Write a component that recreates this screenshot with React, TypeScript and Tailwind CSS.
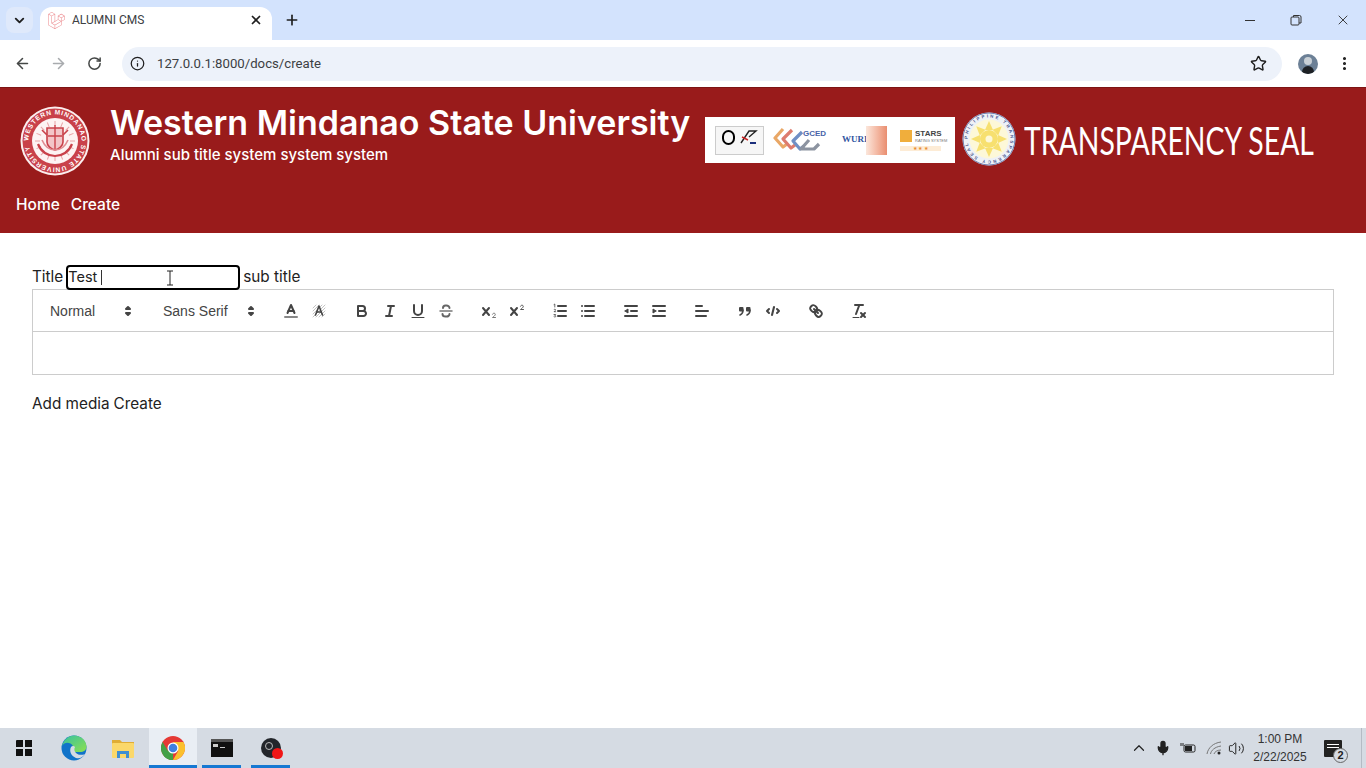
import { ArrowLeft, ArrowRight, ChevronDown, ChevronUp, Info, Mic, MoreVertical, Plus, RotateCw, Star, Volume2, X } from 'lucide-react'
import { FaLaravel } from 'react-icons/fa'

const ink = { fill: 'none', stroke: '#444', strokeWidth: 2, strokeLinecap: 'round', strokeLinejoin: 'round' } as const

function ToolButton({ children }: { children: React.ReactNode }) {
  return (
    <button className="w-[28px] h-[24px] px-[5px] py-[3px] shrink-0">
      <svg viewBox="0 0 18 18" className="w-[18px] h-[18px] block" {...ink}>{children}</svg>
    </button>
  )
}

function Picker({ label, width }: { label: string; width: string }) {
  return (
    <span className={`relative h-[24px] flex items-center pl-[9px] text-[14px] text-[#444] shrink-0 font-['Liberation_Sans',sans-serif] ${width}`}>
      {label}
      <svg viewBox="0 0 18 18" className="absolute right-[2px] top-[3px] w-[18px] h-[18px]">
        <polygon points="7 11 9 13 11 11 7 11" fill="#444" stroke="#444" strokeWidth="2" strokeLinejoin="round" />
        <polygon points="7 7 9 5 11 7 7 7" fill="#444" stroke="#444" strokeWidth="2" strokeLinejoin="round" />
      </svg>
    </span>
  )
}

function EditorToolbar() {
  return (
    <div className="flex items-center gap-[15px] border border-[#ccc] px-2 pt-[9px] pb-2">
      <div className="flex gap-[15px]">
        <Picker label="Normal" width="w-[98px]" />
        <Picker label="Sans Serif" width="w-[108px]" />
      </div>
      <div className="flex">
        <ToolButton>
          <line x1="3" x2="15" y1="15" y2="15" stroke="#888" />
          <polyline points="5.5 11 9 3 12.5 11" />
          <line x1="11.63" x2="6.38" y1="9" y2="9" />
        </ToolButton>
        <ToolButton>
          <g strokeWidth="0.6" stroke="#999">
            <path d="M3 6 6 3M3 9 9 3M3 12l9-9M3 15 15 3M6 15l9-9M9 15l6-6M12 15l3-3" />
          </g>
          <polyline points="5.5 13 9 4 12.5 13" strokeWidth="1.6" />
          <line x1="11" x2="7" y1="10" y2="10" strokeWidth="1.6" />
        </ToolButton>
      </div>
      <div className="flex">
        <ToolButton>
          <path d="M5,4H9.5A2.5,2.5,0,0,1,12,6.5v0A2.5,2.5,0,0,1,9.5,9H5V4Z" />
          <path d="M5,9h5.5A2.5,2.5,0,0,1,13,11.5v0A2.5,2.5,0,0,1,10.5,14H5V9Z" />
        </ToolButton>
        <ToolButton>
          <line x1="7" x2="13" y1="4" y2="4" />
          <line x1="5" x2="11" y1="14" y2="14" />
          <line x1="8" x2="10" y1="14" y2="4" />
        </ToolButton>
        <ToolButton>
          <path d="M5,3V9a4,4,0,0,0,4,4H9a4,4,0,0,0,4-4V3" />
          <line x1="3" x2="15" y1="15.5" y2="15.5" strokeWidth="1" />
        </ToolButton>
        <ToolButton>
          <line x1="3" x2="15" y1="9" y2="9" strokeWidth="1.5" stroke="#777" />
          <path d="M12.5,6A3,2.5,0,0,0,9.5,3.5H8.5A2.5,2.5,0,0,0,6,6" stroke="#666" />
          <path d="M5.5,12A3,2.5,0,0,0,8.5,14.5H9.5A2.7,2.7,0,0,0,12.5,12" stroke="#666" />
        </ToolButton>
      </div>
      <div className="flex">
        <ToolButton>
          <path d="M3 6l6 7M9 6l-6 7" />
          <path d="M12.5 12.2c.4-1.5 2.8-1.3 2.8.2 0 1.2-1.7 1.9-2.8 3.1h3" strokeWidth="1" stroke="#777" />
        </ToolButton>
        <ToolButton>
          <path d="M3 6l6 7M9 6l-6 7" />
          <path d="M12.5 4.2c.4-1.5 2.8-1.3 2.8.2 0 1.2-1.7 1.9-2.8 3.1h3" strokeWidth="1" stroke="#555" />
        </ToolButton>
      </div>
      <div className="flex">
        <ToolButton>
          <path d="M7 4h8M7 9h8M7 14h8" />
          <path d="M3 2.5l.8-.5v3M3 7.6c.4-.7 1.6-.5 1.6.3 0 .7-1 1-1.6 1.8h1.7M3 12.5h1.6l-.8 1c.9 0 1 .5 1 .8 0 .8-1.2.9-1.8.4" strokeWidth=".8" />
        </ToolButton>
        <ToolButton>
          <path d="M6 4h9M6 9h9M6 14h9" />
          <path d="M3 4h.01M3 9h.01M3 14h.01" />
        </ToolButton>
      </div>
      <div className="flex">
        <ToolButton>
          <path d="M3 14h12M3 4h12M9 9h6" />
          <polyline points="3 9 6 7 6 11 3 9" fill="#444" strokeWidth="1" />
        </ToolButton>
        <ToolButton>
          <path d="M3 14h12M3 4h12M9 9h6" />
          <polyline points="6 9 3 7 3 11 6 9" fill="#444" strokeWidth="1" />
        </ToolButton>
      </div>
      <div className="flex">
        <ToolButton>
          <line x1="3" x2="15" y1="9" y2="9" />
          <line x1="3" x2="13" y1="14" y2="14" />
          <line x1="3" x2="9" y1="4" y2="4" />
        </ToolButton>
      </div>
      <div className="flex">
        <ToolButton>
          <rect x="3" y="5" width="4.5" height="4.5" rx="1" fill="#444" stroke="none" />
          <rect x="10" y="5" width="4.5" height="4.5" rx="1" fill="#444" stroke="none" />
          <path d="M7 8c0 2.5-.6 4-3 5M14 8c0 2.5-.6 4-3 5" strokeWidth="1.6" />
        </ToolButton>
        <ToolButton>
          <polyline points="5 7 3 9 5 11" />
          <polyline points="13 7 15 9 13 11" />
          <line x1="10" x2="8" y1="5" y2="13" />
        </ToolButton>
      </div>
      <div className="flex">
        <ToolButton>
          <line x1="7" x2="11" y1="7" y2="11" />
          <path d="M8.9,4.577a3.476,3.476,0,0,1,.36,4.679A3.476,3.476,0,0,1,4.577,8.9C3.185,7.5,2.035,6.4,4.217,4.217S7.5,3.185,8.9,4.577Z" />
          <path d="M13.423,9.1a3.476,3.476,0,0,0-4.679-.36,3.476,3.476,0,0,0,.36,4.679c1.392,1.392,2.5,2.542,4.679.36S14.815,10.5,13.423,9.1Z" />
        </ToolButton>
      </div>
      <div className="flex">
        <ToolButton>
          <line x1="5" x2="13" y1="3" y2="3" />
          <line x1="6" x2="9.35" y1="12" y2="3" />
          <line x1="11" x2="15" y1="11" y2="15" />
          <line x1="15" x2="11" y1="11" y2="15" />
          <line x1="3" x2="9" y1="15.5" y2="15.5" strokeWidth="1" />
        </ToolButton>
      </div>
    </div>
  )
}

function UniversitySeal() {
  const spokes = Array.from({ length: 16 }, (_, i) => i * 22.5)
  return (
    <svg viewBox="0 0 70 70" className="w-[70px] h-[70px] shrink-0">
      <defs>
        <path id="sealRing" d="M35 35m-26.5 0a26.5 26.5 0 1 1 53 0a26.5 26.5 0 1 1-53 0" />
      </defs>
      <circle cx="35" cy="35" r="34.5" fill="#fbeeee" />
      <circle cx="35" cy="35" r="32.5" fill="#c9414a" />
      <text fontSize="6.6" fontWeight="700" fill="#fff" fontFamily="Liberation Sans, sans-serif">
        <textPath href="#sealRing" textLength="160">WESTERN MINDANAO STATE UNIVERSITY</textPath>
      </text>
      <circle cx="35" cy="35" r="23" fill="#fdf3f3" />
      {spokes.map((a) => (
        <line key={a} x1="35" y1="20" x2="35" y2="15" stroke="#e8a4a8" strokeWidth="1" transform={`rotate(${a} 35 35)`} />
      ))}
      <path d="M27 22h16v14c0 4-4 7-8 8-4-1-8-4-8-8z" fill="#f3c5c8" stroke="#c9414a" strokeWidth="1.6" />
      <path d="M35 19v24M28 30h14" stroke="#c9414a" strokeWidth="1.4" />
      <path d="M18 38c3 8 10 12 17 12s14-4 17-12" fill="none" stroke="#c9414a" strokeWidth="2.2" />
      <path d="M22 34c3 7 8 10 13 10s10-3 13-10" fill="none" stroke="#e08b90" strokeWidth="1.6" />
      <path d="M22 24l5 5M48 24l-5 5" stroke="#c9414a" strokeWidth="1.6" />
    </svg>
  )
}

function TransparencySeal() {
  const rays = Array.from({ length: 8 }, (_, i) => i * 45)
  return (
    <svg viewBox="0 0 54 54" className="w-[54px] h-[54px] shrink-0">
      <defs>
        <path id="transRing" d="M27 27m-21.500 0a21.500 21.500 0 1 1 43 0a21.500 21.500 0 1 1-43 0" />
      </defs>
      <circle cx="27" cy="27" r="26.5" fill="#eef1f7" />
      <circle cx="27" cy="27" r="26" fill="none" stroke="#6f7cae" strokeWidth="1" />
      <text fontSize="4.4" fontWeight="700" fill="#4a568f" fontFamily="Liberation Sans, sans-serif">
        <textPath href="#transRing" textLength="130">PHILIPPINE TRANSPARENCY SEAL</textPath>
      </text>
      <circle cx="27" cy="27" r="19.500" fill="#fdf8d8" />
      {rays.map((a) => (
        <path key={a} d="M27 9l4 9h-8z" fill="#f7e06f" transform={`rotate(${a} 27 27)`} />
      ))}
      <circle cx="27" cy="27" r="9" fill="#f7e06f" />
      <circle cx="27" cy="27" r="3.5" fill="#fdf8d8" />
    </svg>
  )
}

function AccreditationStrip() {
  return (
    <div className="w-[250px] h-[46px] -mt-[2px] bg-white shrink-0 flex items-center pl-[10px] font-['Liberation_Sans',sans-serif]">
      <div className="w-[49px] h-[29px] border border-[#ccc] bg-[#f6f6f6] flex items-center justify-around px-[3px] shrink-0">
        <span className="w-[13px] h-[15px] rounded-full border-2 border-black mb-[6px]" />
        <svg viewBox="0 0 18 18" className="w-[18px] h-[18px] mb-[6px]">
          <path d="M1 15 9 3h7L9 9" fill="none" stroke="#222" strokeWidth="1.4" />
          <path d="M2 9l6 3" stroke="#c22" strokeWidth="1.4" />
          <path d="M10 15h6" stroke="#1c2f7c" strokeWidth="2" />
        </svg>
      </div>
      <svg viewBox="0 0 52 28" className="w-[52px] h-[28px] ml-[9px] shrink-0" fill="none" strokeWidth="3.2" strokeLinejoin="round">
        <path d="M10 3 2 12l8 9 4-3" stroke="#e9a766" />
        <path d="M19 4l-9 9 8 9 4-3" stroke="#dd7b6e" />
        <path d="M29 6l-9 9 7 8 4-3" stroke="#6f8fc5" />
        <path d="M36 14l-8 9h13l5-5" stroke="#8c93a0" />
      </svg>
      <div className="w-[22px] -ml-[22px] mb-[13px] text-[8px] leading-[8px] font-bold text-[#4864a8] shrink-0">GCED</div>
      <div className="ml-[17px] flex items-center shrink-0">
        <span className="text-[9px] font-bold font-['Liberation_Serif',serif] text-[#32569f] w-[24px]">WURI</span>
        <span className="w-[21px] h-[29px] bg-gradient-to-r from-[#fbe7dc] to-[#e98e70]" />
      </div>
      <div className="ml-[13px] shrink-0">
        <div className="flex items-center gap-[3px]">
          <span className="w-[12px] h-[12px] bg-[#f0ae3c]" />
          <div>
            <div className="text-[8px] leading-[8px] font-bold text-[#444]">STARS</div>
            <div className="text-[4px] leading-[5px] text-[#777]">RATING SYSTEM</div>
          </div>
        </div>
        <div className="mt-[3px] w-[41px] h-[5px] bg-[#fdecd6] text-center text-[5px] leading-[5px] text-[#e98e30]">★ ★ ★</div>
      </div>
    </div>
  )
}

function BrowserChrome() {
  return (
    <div className="shrink-0 font-['Roboto',sans-serif]">
      <div className="h-10 bg-[#d3e3fd] flex items-end text-[#1f1f1f]">
        <button className="ml-[6px] mb-[7px] w-[27px] h-[26px] rounded-lg bg-[#dfe9fb] flex items-center justify-center">
          <ChevronDown size={15} strokeWidth={3} />
        </button>
        <div className="ml-[7px] w-[232px] h-[33px] rounded-t-xl bg-white flex items-center pl-2 pr-[9px] pb-[7px]">
          <FaLaravel size={17} className="text-[#ec8b8f]" />
          <span className="ml-[7px] text-[12px] text-[#3c4043]">ALUMNI CMS</span>
          <X size={14} strokeWidth={3} className="ml-auto" />
        </div>
        <Plus size={16} strokeWidth={2.5} className="ml-[12px] mb-[12px]" />
        <div className="ml-auto flex items-center mb-[12px] pr-[15px] gap-[32px] text-[#333]">
          <svg viewBox="0 0 14 14" className="w-[14px] h-[14px]" fill="none" stroke="currentColor"><path d="M2 7.5h10" /></svg>
          <svg viewBox="0 0 14 14" className="w-[14px] h-[14px]" fill="none" stroke="currentColor"><rect x="2" y="4" width="8" height="8" rx="1" /><path d="M4.5 4V2.5h6a1.5 1.5 0 0 1 1.500 1.500v6H10" /></svg>
          <X size={16} strokeWidth={1.4} />
        </div>
      </div>
      <div className="h-[47px] bg-white rounded-t-lg flex items-center text-[#444746]">
        <ArrowLeft size={17} strokeWidth={2.2} className="ml-[14px]" />
        <ArrowRight size={17} strokeWidth={2.2} className="ml-[19px] text-[#a8abae]" />
        <RotateCw size={15} strokeWidth={2.4} className="ml-[20px]" />
        <div className="ml-[20px] w-[1160px] h-[34px] rounded-full bg-[#edf2fa] flex items-center">
          <Info size={15} strokeWidth={2} className="ml-[8px] text-[#1f1f1f]" />
          <span className="ml-[12px] text-[13.2px] text-[#3c4043]">127.0.0.1:8000/docs/create</span>
          <Star size={17} strokeWidth={2} className="ml-auto mr-[15px] text-[#1f1f1f]" />
        </div>
        <span className="ml-[16px] w-[20px] h-[20px] rounded-full bg-[#6c8096] overflow-hidden flex flex-col items-center">
          <span className="w-[8px] h-[8px] mt-[3px] rounded-full bg-[#c9d0d6]" />
          <span className="w-[12px] h-[8px] mt-[1px] rounded-t-md bg-[#1d2024]" />
        </span>
        <MoreVertical size={17} strokeWidth={2.4} className="ml-[18px] text-[#1f1f1f]" />
      </div>
    </div>
  )
}

function Taskbar() {
  return (
    <div className="h-10 shrink-0 bg-[#d5dbe3] flex items-stretch font-['Liberation_Sans',sans-serif]">
      <div className="ml-[16px] w-[16px] self-center grid grid-cols-2 gap-[1.500px]">
        <span className="h-[7px] bg-[#111] rounded-tl-[1px]" />
        <span className="h-[7px] bg-[#111]" />
        <span className="h-[7px] bg-[#111]" />
        <span className="h-[7px] bg-[#111]" />
      </div>
      <div className="ml-[29px] w-[26px] self-center">
        <svg viewBox="0 0 26 26" className="w-[26px] h-[26px] block">
          <defs>
            <linearGradient id="edgeA" x1="0" y1="0" x2="1" y2="1">
              <stop offset="0" stopColor="#35c1a0" />
              <stop offset="1" stopColor="#8ee04f" />
            </linearGradient>
          </defs>
          <circle cx="13" cy="13" r="12.500" fill="#1173c9" />
          <path d="M1 11C3 4 8 .5 13 .5c7 0 12.500 5 12.500 11.500 0 3-3 5-6.500 5H13c-1.500 0-2-1-1.500-2 1-2 1-5-2-6.500C6 7 3 8 1 11z" fill="url(#edgeA)" />
          <path d="M10 12c-2 4 0 9 5 11 4 1 7-1 9-4-3 1.500-7 1-9-1s-2-4-1-6c-1-1.500-3-1.500-4 0z" fill="#d5dbe3" />
        </svg>
      </div>
      <div className="ml-[25px] w-[22px] self-center">
        <svg viewBox="0 0 22 20" className="w-[22px] h-[20px] block">
          <path d="M0 2h8l2 2h12v3H0z" fill="#e0ad35" />
          <rect y="5" width="22" height="15" rx="1" fill="#fbd86a" />
          <rect x="5" y="13" width="12" height="7" fill="#3f8fd2" />
          <rect x="8" y="16" width="6" height="4" fill="#fbd86a" />
        </svg>
      </div>
      <div className="ml-[15px] w-[48px] bg-[#e9eef4] border-b-[3px] border-[#1678d2] flex items-center justify-center pt-[3px]">
        <svg viewBox="0 0 24 24" className="w-[24px] h-[24px]">
          <circle cx="12" cy="12" r="12" fill="#e53935" />
          <path d="M12 12 1.600 18A12 12 0 0 0 12 24z" fill="#43a047" />
          <path d="M1.600 18A12 12 0 0 1 1.600 6L7 15l5 9A12 12 0 0 1 1.600 18z" fill="#43a047" />
          <path d="M12 6h10.400A12 12 0 0 1 12 24l5.200-9z" fill="#fbc02d" />
          <circle cx="12" cy="12" r="5.500" fill="#fff" />
          <circle cx="12" cy="12" r="4.300" fill="#3f7fe0" />
        </svg>
      </div>
      <div className="ml-[5px] w-[39px] border-b-[3px] border-[#1678d2] flex items-center justify-center pt-[3px]">
        <div className="w-[22px] h-[18px] bg-[#111] border-t-[3px] border-[#555] relative">
          <span className="absolute left-[2px] top-[2px] w-[5px] h-[3px] bg-[#ccc]" />
          <span className="absolute left-[9px] top-[5px] w-[5px] h-[1px] bg-[#ccc]" />
        </div>
      </div>
      <div className="ml-[10px] w-[39px] border-b-[3px] border-[#1678d2] flex items-center justify-center pt-[3px]">
        <div className="relative w-[20px] h-[20px] rounded-full bg-[#23262b]">
          <span className="absolute left-[4px] top-[4px] w-[8px] h-[8px] rounded-full border border-[#bbb]" />
          <span className="absolute -right-[2px] -bottom-[1px] w-[11px] h-[11px] rounded-full bg-[#f01616]" />
        </div>
      </div>
      <div className="ml-auto flex items-center text-[#222]">
        <ChevronUp size={18} strokeWidth={1.600} />
        <Mic size={16} strokeWidth={2} fill="#222" className="ml-[7px]" />
        <svg viewBox="0 0 16 12" className="ml-[9px] w-[16px] h-[12px]">
          <rect x="4" y="3" width="11" height="7" rx="1.500" fill="none" stroke="#222" />
          <rect x="5" y="4" width="7" height="5" fill="#222" />
          <path d="M1 1v3M3 1v3" stroke="#222" />
        </svg>
        <svg viewBox="0 0 16 14" className="ml-[10px] w-[16px] h-[14px]" fill="none" stroke="#777">
          <path d="M1 13C2 7 7 2 15 1M4.500 13c.6-3.500 4-7 10.500-8M8 13c.5-2 3-4 7-4" />
          <circle cx="13" cy="12" r="1.500" fill="#222" stroke="none" />
        </svg>
        <Volume2 size={17} strokeWidth={1.400} className="ml-[6px]" />
        <div className="w-[70px] text-center text-[12px] leading-[18px] text-[#333]">
          <div>1:00 PM</div>
          <div>2/22/2025</div>
        </div>
        <div className="relative ml-[9px] w-[18px] h-[17px] bg-[#222] rounded-[1px]">
          <span className="absolute left-[3px] top-[4px] w-[12px] h-[1px] bg-white" />
          <span className="absolute left-[3px] top-[7px] w-[12px] h-[1px] bg-white" />
          <span className="absolute -right-[6px] -bottom-[6px] w-[15px] h-[15px] rounded-full bg-[#d5dbe3] border border-[#666] text-[11px] leading-[13px] text-center font-bold">2</span>
        </div>
        <span className="ml-[19px] mr-[4px] w-px self-stretch bg-[#b4bbc4]" />
      </div>
    </div>
  )
}

export default function App() {
  return (
    <div className="h-screen flex flex-col overflow-hidden bg-white font-['Inter',sans-serif]">
      <BrowserChrome />

      <header className="h-[146px] shrink-0 bg-[#991b1b] text-white border-t border-[#7d1414]">
        <div className="flex items-center pl-[20px] pt-[18px]">
          <UniversitySeal />
          <div className="ml-[20px] w-[595px] shrink-0 -mt-[14px]">
            <h1 className="text-[34px] leading-[38px] font-semibold">Western Mindanao State University</h1>
            <p className="text-[15px] leading-[20px] font-medium mt-[3px]">Alumni sub title system system system</p>
          </div>
          <AccreditationStrip />
          <div className="ml-[7px] -mt-[4px]">
            <TransparencySeal />
          </div>
          <span className="ml-[8px] w-[290px] -mt-[2px] text-[38px] leading-none font-['Lato',sans-serif] whitespace-nowrap origin-left scale-x-[0.747]">TRANSPARENCY SEAL</span>
        </div>
        <nav className="mt-[17px] ml-[16px] flex gap-[11px] text-[15.5px] font-medium">
          <a>Home</a>
          <a>Create</a>
        </nav>
      </header>

      <main className="flex-1 px-8 pt-8 text-[15.3px] text-[#222]">
        <div className="flex items-center h-[24px]">
          <span>Title</span>
          <div className="relative ml-[3px]">
            <input
              readOnly
              value="Test "
              className="block w-[174px] h-[25px] border-2 border-black rounded-[4px] px-0 pb-[1px] text-[14.5px] bg-white outline-none"
            />
            <span className="absolute left-[35px] top-[5px] w-px h-[15px] bg-[#333]" />
            <svg viewBox="0 0 8 16" className="absolute left-[100px] top-[5px] w-[8px] h-[16px]" fill="none" stroke="#222">
              <path d="M1 1h6M1 15h6M4 1v14" />
            </svg>
          </div>
          <span className="ml-[3px]">sub title</span>
        </div>
        <div>
          <EditorToolbar />
          <div className="h-[43px] border border-t-0 border-[#ccc]" />
        </div>
        <div className="mt-[18px] flex gap-[4px]">
          <span>Add media</span>
          <span>Create</span>
        </div>
      </main>

      <Taskbar />
    </div>
  )
}
